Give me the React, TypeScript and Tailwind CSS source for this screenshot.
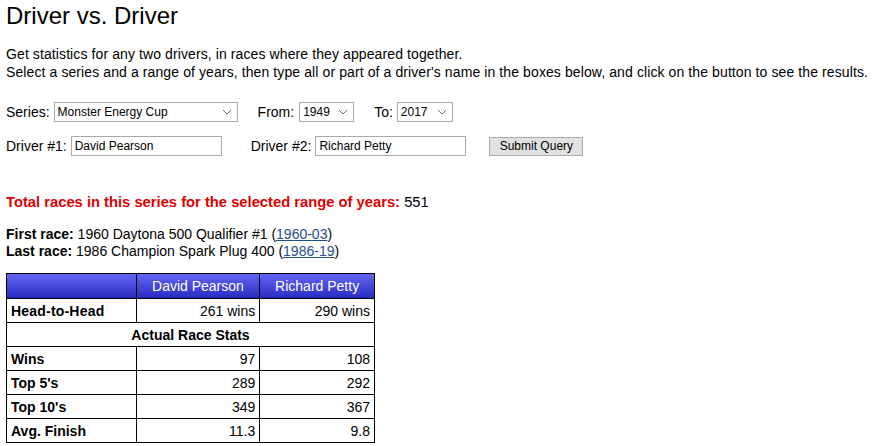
import React from "react";

function Chevron() {
  return (
    <svg width="10" height="6" viewBox="0 0 10 6" className="shrink-0">
      <path d="M1 1 L5 5 L9 1" fill="none" stroke="#6b6b6b" strokeWidth="1" />
    </svg>
  );
}

function FakeSelect({ value, w }: { value: string; w: string }) {
  return (
    <div className={`${w} h-[20px] border border-[#a9a9a9] bg-white flex items-center justify-between pl-[3px] pr-[5px] text-[12px] leading-[14px]`}>
      <span>{value}</span>
      <Chevron />
    </div>
  );
}

function FakeInput({ value }: { value: string }) {
  return (
    <div className="w-[151px] h-[20px] border border-[#a9a9a9] bg-white flex items-center pl-[3px] text-[12px] leading-[14px]">
      {value}
    </div>
  );
}

const rows = [
  { label: "Wins", a: "97", b: "108" },
  { label: "Top 5's", a: "289", b: "292" },
  { label: "Top 10's", a: "349", b: "367" },
  { label: "Avg. Finish", a: "11.3", b: "9.8" },
];

export default function App() {
  return (
    <div className="w-[876px] h-[446px] overflow-hidden bg-white text-black px-[6px] font-['Liberation_Sans',Arial,sans-serif] text-[14px] leading-[16px]">
      <h1 className="text-[24px] leading-[28px] pt-[2px] font-normal">Driver vs. Driver</h1>
      <p className="mt-[15px] leading-[18px] tracking-[0.1px]">
        Get statistics for any two drivers, in races where they appeared together.
        <br />
        Select a series and a range of years, then type all or part of a driver's name in the boxes below, and click on the button to see the results.
      </p>
      <div className="mt-[21px] flex items-center h-[20px]">
        <span className="mr-[4px]">Series:</span>
        <FakeSelect value="Monster Energy Cup" w="w-[184px]" />
        <span className="ml-[20px] mr-[5px]">From:</span>
        <FakeSelect value="1949" w="w-[55px]" />
        <span className="ml-[20px] mr-[4px]">To:</span>
        <FakeSelect value="2017" w="w-[56px]" />
      </div>
      <div className="mt-[14px] flex items-center h-[20px]">
        <span className="mr-[4px]">Driver #1:</span>
        <FakeInput value="David Pearson" />
        <span className="ml-[29px] mr-[4px]">Driver #2:</span>
        <FakeInput value="Richard Petty" />
        <div className="ml-[23px] w-[94px] h-[19px] border border-[#adadad] bg-[#e1e1e1] flex items-center justify-center text-[12px] leading-[14px]">
          Submit Query
        </div>
      </div>
      <div className="mt-[38px] text-[14.75px] leading-[17px]">
        <span className="font-bold text-[#e00000]">Total races in this series for the selected range of years:</span> 551
      </div>
      <div className="mt-[15px]">
        <div className="leading-[17px]">
          <span className="font-bold">First race:</span> 1960 Daytona 500 Qualifier #1 (
          <span className="underline text-[#1f4e8c]">1960-03</span>)
        </div>
        <div className="leading-[17px]">
          <span className="font-bold">Last race:</span> 1986 Champion Spark Plug 400 (
          <span className="underline text-[#1f4e8c]">1986-19</span>)
        </div>
      </div>
      <table className="mt-[13px] border-collapse border border-black w-[369px] text-[14px]">
        <thead>
          <tr className="h-[25px] bg-gradient-to-b from-[#6464f2] to-[#2828c0] text-white">
            <th className="border border-black w-[130px] font-normal"></th>
            <th className="border border-black w-[124px] font-normal">David Pearson</th>
            <th className="border border-black w-[115px] font-normal">Richard Petty</th>
          </tr>
        </thead>
        <tbody>
          <tr className="h-[24px]">
            <td className="border border-black font-bold pl-[4px] tracking-[0.2px]">Head-to-Head</td>
            <td className="border border-black text-right pr-[4px]">261 wins</td>
            <td className="border border-black text-right pr-[4px]">290 wins</td>
          </tr>
          <tr className="h-[24px]">
            <td colSpan={3} className="border border-black font-bold text-center">Actual Race Stats</td>
          </tr>
          {rows.map((r) => (
            <tr key={r.label} className="h-[24px]">
              <td className="border border-black font-bold pl-[4px]">{r.label}</td>
              <td className="border border-black text-right pr-[4px]">{r.a}</td>
              <td className="border border-black text-right pr-[4px]">{r.b}</td>
            </tr>
          ))}
        </tbody>
      </table>
    </div>
  );
}
